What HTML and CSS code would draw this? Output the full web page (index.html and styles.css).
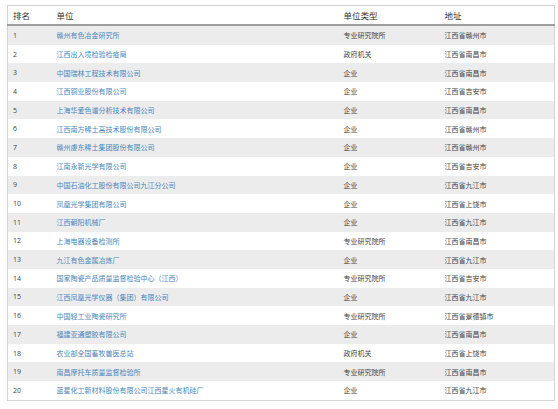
FILE: index.html
```html
<!DOCTYPE html>
<html lang="zh-CN">
<head>
<meta charset="utf-8">
<link rel="stylesheet" href="styles.css">
</head>
<body>
<div class="wrap">
<table class="rank">
<colgroup><col class="c1"><col class="c2"><col class="c3"><col class="c4"></colgroup>
<thead>
<tr><th>排名</th><th>单位</th><th>单位类型</th><th>地址</th></tr>
</thead>
<tbody>
<tr><td>1</td><td><a>赣州有色冶金研究所</a></td><td>专业研究院所</td><td>江西省赣州市</td></tr>
<tr><td>2</td><td><a>江西出入境检验检疫局</a></td><td>政府机关</td><td>江西省南昌市</td></tr>
<tr><td>3</td><td><a>中国瑞林工程技术有限公司</a></td><td>企业</td><td>江西省南昌市</td></tr>
<tr><td>4</td><td><a>江西铜业股份有限公司</a></td><td>企业</td><td>江西省吉安市</td></tr>
<tr><td>5</td><td><a>上海华爱色谱分析技术有限公司</a></td><td>企业</td><td>江西省南昌市</td></tr>
<tr><td>6</td><td><a>江西南方稀土高技术股份有限公司</a></td><td>企业</td><td>江西省赣州市</td></tr>
<tr><td>7</td><td><a>赣州虔东稀土集团股份有限公司</a></td><td>企业</td><td>江西省赣州市</td></tr>
<tr><td>8</td><td><a>江南永新光学有限公司</a></td><td>企业</td><td>江西省吉安市</td></tr>
<tr><td>9</td><td><a>中国石油化工股份有限公司九江分公司</a></td><td>企业</td><td>江西省九江市</td></tr>
<tr><td>10</td><td><a>凤凰光学集团有限公司</a></td><td>企业</td><td>江西省上饶市</td></tr>
<tr><td>11</td><td><a>江西朝阳机械厂</a></td><td>企业</td><td>江西省九江市</td></tr>
<tr><td>12</td><td><a>上海电器设备检测所</a></td><td>专业研究院所</td><td>江西省南昌市</td></tr>
<tr><td>13</td><td><a>九江有色金属冶炼厂</a></td><td>企业</td><td>江西省九江市</td></tr>
<tr><td>14</td><td><a>国家陶瓷产品质量监督检验中心（江西）</a></td><td>专业研究院所</td><td>江西省吉安市</td></tr>
<tr><td>15</td><td><a>江西凤凰光学仪器（集团）有限公司</a></td><td>企业</td><td>江西省九江市</td></tr>
<tr><td>16</td><td><a>中国轻工业陶瓷研究所</a></td><td>专业研究院所</td><td>江西省景德镇市</td></tr>
<tr><td>17</td><td><a>福建亚通塑胶有限公司</a></td><td>企业</td><td>江西省南昌市</td></tr>
<tr><td>18</td><td><a>农业部全国畜牧兽医总站</a></td><td>政府机关</td><td>江西省上饶市</td></tr>
<tr><td>19</td><td><a>南昌摩托车质量监督检验所</a></td><td>专业研究院所</td><td>江西省南昌市</td></tr>
<tr><td>20</td><td><a>蓝星化工新材料股份有限公司江西星火有机硅厂</a></td><td>企业</td><td>江西省九江市</td></tr>
</tbody>
</table>
</div>
</body>
</html>
```
FILE: styles.css
```css
html, body { margin: 0; padding: 0; background: #fff; }
.wrap { padding: 5px 0 0 7px; }
.rank {
  width: 547px;
  border-collapse: collapse;
  table-layout: fixed;
  border: 1px solid #d4d4d4;
  font-family: "Open Sans", "Noto Sans CJK SC", sans-serif;
  color: #444;
}
.c1 { width: 44px; }
.c2 { width: 287px; }
.c3 { width: 101px; }
.c4 { width: 115px; }
.rank th {
  text-align: left;
  font-weight: normal;
  font-size: 8.5px;
  height: 18px;
  padding: 0 5px;
  border-bottom: 2px solid #9e9e9e;
  color: #333;
}
.rank td {
  font-size: 7px;
  height: 18.7px;
  padding: 0 5px;
  white-space: nowrap;
}
.rank tbody tr:nth-child(odd) { background: #ececec; }
.rank a { color: #4a87bd; }
```
